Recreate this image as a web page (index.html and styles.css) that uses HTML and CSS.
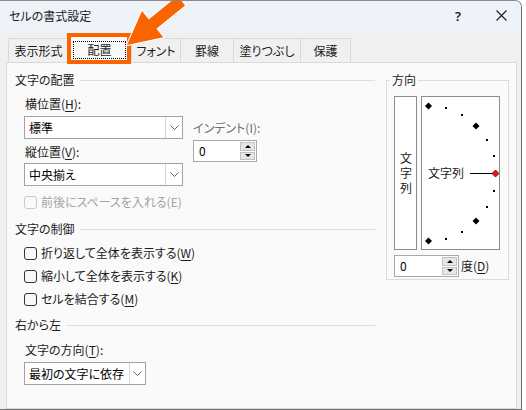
FILE: index.html
```html
<!DOCTYPE html>
<html lang="ja">
<head>
<meta charset="utf-8">
<title>セルの書式設定</title>
<link rel="stylesheet" href="styles.css">
</head>
<body>
<div class="window">
  <div class="titlebar">
    <span class="title">セルの書式設定</span>
    <span class="help">?</span>
    <span class="close"><svg width="11" height="11" viewBox="0 0 11 11"><path d="M0.5 0.5L10.5 10.5M10.5 0.5L0.5 10.5" stroke="#1c1c1c" stroke-width="1.1" fill="none"/></svg></span>
  </div>
  <div class="tabs">
    <div class="tab w1">表示形式</div>
    <div class="tab sel"><span class="focus">配置</span><span class="hl"></span></div>
    <div class="tab w3">フォント</div>
    <div class="tab w4">罫線</div>
    <div class="tab w5">塗りつぶし</div>
    <div class="tab w6 last">保護</div>
  </div>
  <div class="panel">
    <div class="left">
      <div class="group-h">文字の配置</div>
      <div class="hrow">
        <div class="vcol">
          <div class="lbl">横位置(<u>H</u>):</div>
          <div class="select s1"><span class="txt">標準</span><span class="btn"><svg width="9" height="5" viewBox="0 0 9 5"><path d="M0.5 0.5L4.5 4.5L8.5 0.5" stroke="#606060" fill="none"/></svg></span></div>
          <div class="lbl l2">縦位置(<u>V</u>):</div>
          <div class="select s2"><span class="txt">中央揃え</span><span class="btn"><svg width="9" height="5" viewBox="0 0 9 5"><path d="M0.5 0.5L4.5 4.5L8.5 0.5" stroke="#606060" fill="none"/></svg></span></div>
        </div>
        <div class="indent">
          <div class="lbl-gray">インデント(I):</div>
          <div class="spin"><span class="val">0</span><span class="spinbtns"><span class="spinbtn up"></span><span class="spinbtn dn"></span></span></div>
        </div>
      </div>
      <div class="cb-row disabled"><span class="box"></span>前後にスペースを入れる(E)</div>
      <div class="group-h g2">文字の制御</div>
      <div class="cb-row c1"><span class="box"></span>折り返して全体を表示する(<u>W</u>)</div>
      <div class="cb-row c2"><span class="box"></span>縮小して全体を表示する(<u>K</u>)</div>
      <div class="cb-row c2"><span class="box"></span>セルを結合する(<u>M</u>)</div>
      <div class="group-h g3">右から左</div>
      <div class="lbl l3">文字の方向(<u>T</u>):</div>
      <div class="select s3"><span class="txt">最初の文字に依存</span><span class="btn"><svg width="9" height="5" viewBox="0 0 9 5"><path d="M0.5 0.5L4.5 4.5L8.5 0.5" stroke="#606060" fill="none"/></svg></span></div>
    </div>
    <fieldset class="orient">
      <legend>方向</legend>
      <div class="dial-row">
        <div class="vtext"><span class="vt">文字列</span></div>
        <div class="dial">
          <svg width="77" height="152" viewBox="0 0 77 152" shape-rendering="crispEdges">
            <g fill="#000">
              <rect x="23" y="10" width="2" height="2"/>
              <rect x="39" y="17" width="2" height="2"/>
              <rect x="64" y="42" width="2" height="2"/>
              <rect x="71" y="58" width="2" height="2"/>
              <rect x="71" y="93" width="2" height="2"/>
              <rect x="64" y="109" width="2" height="2"/>
              <rect x="39" y="134" width="2" height="2"/>
              <rect x="23" y="141" width="2" height="2"/>
            </g>
            <g fill="#000" shape-rendering="auto">
              <polygon points="6.5,5.5 10,9 6.5,12.5 3,9"/>
              <polygon points="54,25.5 57.5,29 54,32.5 50.5,29"/>
              <polygon points="54,120.5 57.5,124 54,127.5 50.5,124"/>
              <polygon points="6.5,140.5 10,144 6.5,147.5 3,144"/>
            </g>
            <rect x="48" y="76" width="24" height="1" fill="#000"/>
            <polygon points="73.5,73 77,76.5 73.5,80 70,76.5" fill="#e8141b" stroke="#5a0000" stroke-width="0.8" shape-rendering="auto"/>
            <text x="6" y="81" class="dial-text">文字列</text>
          </svg>
        </div>
      </div>
      <div class="deg-row">
        <div class="spin deg"><span class="val">0</span><span class="spinbtns"><span class="spinbtn up"></span><span class="spinbtn dn"></span></span></div>
        <span class="deg-lbl">度(<u>D</u>)</span>
      </div>
    </fieldset>
  </div>
  <svg class="arrow" width="526" height="70" viewBox="0 0 526 70">
    <polygon points="127,45 142,11 148.8,19.5 177.5,-4 185.1,5.5 156.4,28.8 163.3,37.3" fill="#f96400" stroke="#ffffff" stroke-width="2" stroke-linejoin="miter" paint-order="stroke"/>
  </svg>
</div>
</body>
</html>
```

FILE: styles.css
```css
* { box-sizing: border-box; }
html, body { margin: 0; padding: 0; }
body {
  width: 526px;
  height: 410px;
  background: #ffffff;
  font-family: "Noto Sans CJK JP", "Noto Sans", sans-serif;
  font-size: 12px;
  line-height: 16px;
  color: #1b1b1b;
  font-feature-settings: "palt";
  overflow: hidden;
}
u { text-decoration: underline; text-underline-offset: 2px; }

.window {
  position: relative;
  width: 522px;
  height: 410px;
  background: #f0f0f0;
  border-top: 1px solid #8a8a8a;
  border-right: 1px solid #6e6e6e;
  border-bottom: 1px solid #6e6e6e;
  border-top-right-radius: 7px;
  display: flex;
  flex-direction: column;
  overflow: hidden;
}

.titlebar {
  height: 29px;
  flex: none;
  background: #eef2f9;
  display: flex;
  align-items: center;
  padding-left: 9px;
}
.title { flex: 1; }
.help {
  width: 48px;
  text-align: center;
  font-family: "Noto Sans", sans-serif;
  font-size: 13px;
  font-weight: 600;
  color: #1c1c1c;
}
.close {
  width: 39px;
  display: flex;
  align-items: center;
  justify-content: center;
}

.tabs {
  display: flex;
  align-items: flex-end;
  margin: 5px 0 0 8px;
  flex: none;
  position: relative;
  z-index: 2;
}
.tab {
  height: 24px;
  border-top: 1px solid #d9d9d9;
  border-left: 1px solid #d9d9d9;
  background: #f0f0f0;
  display: flex;
  align-items: center;
  justify-content: center;
  padding-top: 1px;
}
.tab.last { border-right: 1px solid #d9d9d9; }
.w1 { width: 60px; }
.w3 { width: 49px; }
.w4 { width: 53px; }
.w5 { width: 67px; }
.w6 { width: 51px; }
.tab.sel {
  position: relative;
  width: 63px;
  height: 28px;
  margin-bottom: -1px;
  background: #fafafa;
  border: 1px solid #d9d9d9;
  border-bottom: none;
  padding-top: 0;
}
.focus {
  display: inline-block;
  padding: 0 13px;
  border: 1px dotted #000;
  line-height: 16px;
}
.hl {
  position: absolute;
  left: -2px;
  top: -3px;
  width: 64px;
  height: 31px;
  border: 4px solid #f96400;
}

.panel {
  flex: 1;
  margin: 0 4px 0 6px;
  background: #fafafa;
  border: 1px solid #d9d9d9;
  padding: 9px 0 0 8px;
  display: flex;
  align-items: flex-start;
}

.left { width: 360px; }
.group-h { display: flex; align-items: center; }
.group-h::after {
  content: "";
  flex: 1;
  height: 1px;
  background: #dedede;
  margin-left: 5px;
}
.g2 { margin-top: 11px; }
.g3 { margin-top: 10px; }

.hrow { display: flex; margin: 8px 0 0 9px; }
.vcol { width: 159px; }
.lbl { margin-left: 1px; }
.l2 { margin-top: 5px; }
.l3 { margin: 9px 0 0 10px; }

.select {
  display: flex;
  height: 23px;
  border: 1px solid #a2a2a2;
  background: #ffffff;
  width: 159px;
}
.s1 { margin-top: 4px; }
.s2 { margin-top: 3px; }
.s3 { width: 122px; margin: 4px 0 0 9px; }
.select .txt { flex: 1; padding-left: 4px; line-height: 21px; color: #000; }
.select .btn {
  width: 17px;
  border-left: 1px solid #d6d6d6;
  display: flex;
  align-items: center;
  justify-content: center;
}
.s3 .btn { width: 16px; }

.indent { margin-left: 10px; padding-top: 24px; }
.lbl-gray { color: #6f6f6f; }

.spin {
  width: 64px;
  height: 22px;
  margin-top: 4px;
  border: 1px solid #a8a8a8;
  background: #ffffff;
  display: flex;
  align-items: center;
  padding: 1px;
}
.spin .val { flex: 1; padding-left: 4px; color: #000; }
.spinbtns {
  width: 15px;
  height: 18px;
  display: flex;
  flex-direction: column;
  gap: 1px;
}
.spinbtn {
  flex: 1;
  background: #e6e6e6;
  border: 1px solid #c2c2c2;
  display: flex;
  align-items: center;
  justify-content: center;
}
.spinbtn.up::before {
  content: "";
  border-left: 3px solid transparent;
  border-right: 3px solid transparent;
  border-bottom: 3px solid #000;
}
.spinbtn.dn::before {
  content: "";
  border-left: 3px solid transparent;
  border-right: 3px solid transparent;
  border-top: 3px solid #000;
}

.cb-row {
  display: flex;
  align-items: center;
  height: 16px;
  margin-left: 9px;
}
.cb-row .box {
  width: 13px;
  height: 13px;
  border: 1px solid #333;
  border-radius: 3px;
  background: #f8f8f8;
  margin-right: 4px;
  flex: none;
}
.cb-row.disabled { margin-top: 8px; color: #a3a3a3; }
.cb-row.disabled .box { border-color: #c9c9c9; background: #fafafa; }
.c1 { margin-top: 8px; }
.c2 { margin-top: 7px; }

.orient {
  margin: 0 0 0 11px;
  padding: 8px 7px 2px 7px;
  border: 1px solid #dcdcdc;
  width: 123px;
  min-width: 0;
}
.orient legend {
  padding: 0 2px;
  margin-left: -4px;
  line-height: 16px;
}
.dial-row { display: flex; gap: 4px; }
.vtext {
  width: 23px;
  height: 154px;
  border: 1px solid #8c8c8c;
  background: #ffffff;
  display: flex;
  align-items: center;
  justify-content: center;
}
.vt {
  writing-mode: vertical-rl;
  text-orientation: upright;
  letter-spacing: 3px;
  line-height: 16px;
  font-feature-settings: normal;
  margin-top: 3px;
}
.dial {
  width: 79px;
  height: 154px;
  border: 1px solid #8c8c8c;
  background: #ffffff;
}
.dial svg { display: block; }
.dial-text {
  font-family: "Noto Sans CJK JP", sans-serif;
  font-size: 12px;
  fill: #1b1b1b;
}
.deg-row { display: flex; align-items: center; margin-top: 5px; }
.spin.deg { width: 65px; margin-top: 0; }
.deg-lbl { margin-left: 2px; }

.arrow {
  position: absolute;
  left: 0;
  top: -1px;
  z-index: 5;
  overflow: visible;
}
```
